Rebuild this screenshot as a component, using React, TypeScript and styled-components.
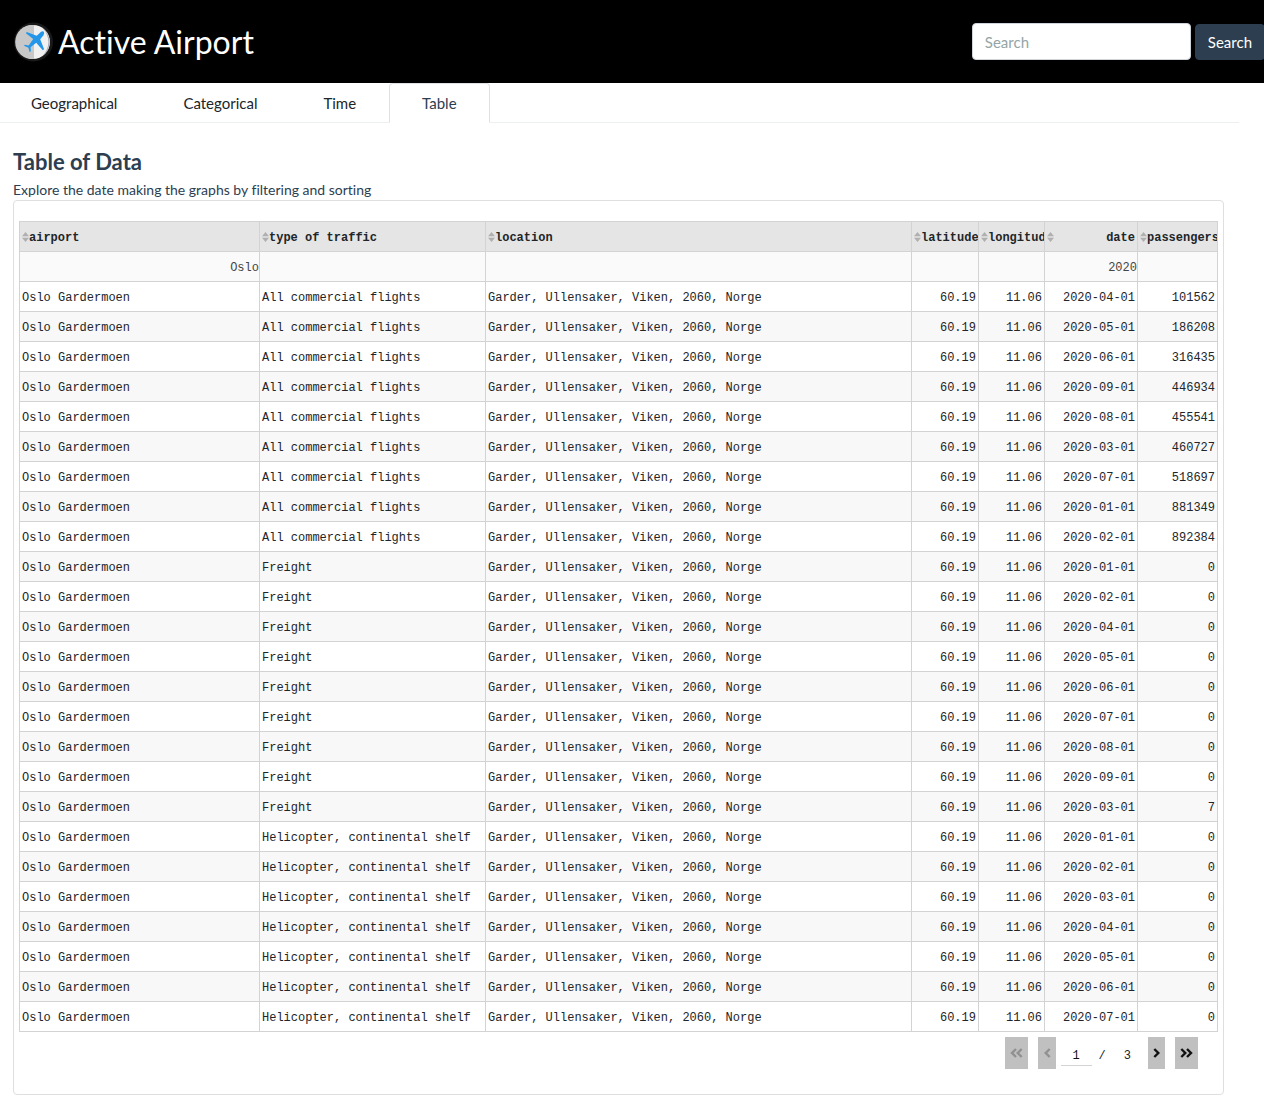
import React, { useState } from "react";
import styled, { createGlobalStyle } from "styled-components";

const GlobalStyle = createGlobalStyle`
  *, *::before, *::after { box-sizing: border-box; }
  body {
    margin: 0;
    background: #fff;
    color: #212529;
    font-family: Lato, "Liberation Sans", sans-serif;
    font-size: 15px;
    line-height: 1.5;
    font-variant-ligatures: none;
    overflow-x: hidden;
  }
  button, input { font: inherit; }
`;

const Header = styled.header`
  display: flex;
  align-items: center;
  justify-content: space-between;
  height: 83px;
  padding-left: 13px;
  background: #000;
  overflow: hidden;
`;

const Brand = styled.a`
  display: flex;
  align-items: center;
  gap: 5px;
  color: #fff;
  font-size: 32px;
  line-height: 48px;
  text-decoration: none;
`;

const SearchForm = styled.form`
  display: flex;
  align-items: flex-end;
  gap: 4px;
  margin-right: -1px;
`;

const SearchInput = styled.input`
  width: 219px;
  height: 37px;
  padding: 6px 12px;
  border: 1px solid #ced4da;
  border-radius: 4px;
  background: #fff;
  color: #7b8a8b;
  &::placeholder { color: #95a5a6; opacity: 1; }
`;

const SearchButton = styled.button`
  height: 36px;
  padding: 0 12px;
  border: 1px solid #2c3e50;
  border-radius: 4px;
  background: #2c3e50;
  color: #fff;
`;

const Tabs = styled.nav`
  display: flex;
  height: 40px;
  margin: 0 25px 0 -2px;
  border-bottom: 1px solid #ecf0f1;
`;

const Tab = styled.a<{ $active?: boolean }>`
  display: flex;
  align-items: center;
  height: 40px;
  padding: 0 32px;
  border: 1px solid ${(p) => (p.$active ? "#dee2e6" : "transparent")};
  border-bottom-color: ${(p) => (p.$active ? "#fff" : "#ecf0f1")};
  border-radius: 4px 4px 0 0;
  color: ${(p) => (p.$active ? "#2c3e50" : "#212529")};
  text-decoration: none;
`;

const Main = styled.main`
  padding: 25px 40px 12px 13px;
  color: #2c3e50;
`;

const Title = styled.h1`
  margin: 0;
  font-size: 22px;
  line-height: 28px;
  font-weight: 700;
`;

const Subtitle = styled.p`
  margin: 4px 0 1px;
  font-size: 14px;
  line-height: 19px;
`;

const Card = styled.section`
  padding: 20px 5px 25px;
  border: 1px solid #dfdfdf;
  border-radius: 4px;
  color: #212529;
  font-family: "Liberation Mono", monospace;
  font-size: 12px;
`;

const DataTable = styled.table`
  width: 100%;
  table-layout: fixed;
  border-collapse: collapse;
  line-height: 15px;
`;

const Col = styled.col<{ $share: number }>`
  width: ${(p) => (p.$share * 100) / 1198}%;
`;

const HeadCell = styled.th`
  height: 30px;
  padding: 4px 2px 0;
  border: 1px solid #d3d3d3;
  background: #e5e5e5;
  overflow: hidden;
`;

const SortButton = styled.button<{ $spread?: boolean }>`
  display: flex;
  align-items: flex-start;
  justify-content: ${(p) => (p.$spread ? "space-between" : "flex-start")};
  width: 100%;
  padding: 0;
  border: 0;
  background: none;
  color: inherit;
  font-weight: 700;
  white-space: nowrap;
`;

const SortIcon = styled.svg`
  flex: none;
  width: 7px;
  height: 10px;
  margin-top: 1px;
  fill: #b0b0b0;
`;

const FilterCell = styled.td`
  height: 30px;
  padding: 0;
  border: 1px solid #d3d3d3;
  background: #fafafa;
`;

const FilterInput = styled.input`
  display: block;
  width: 100%;
  height: 24px;
  padding: 2px 0 0;
  border: 0;
  background: transparent;
  color: #444;
  text-align: right;
  outline: none;
`;

const BodyRow = styled.tr`
  &:nth-child(even) { background: #f8f8f8; }
`;

const Cell = styled.td<{ $numeric?: boolean }>`
  height: 30px;
  padding: 4px 2px 0;
  border: 1px solid #d3d3d3;
  text-align: ${(p) => (p.$numeric ? "right" : "left")};
  white-space: nowrap;
  overflow: hidden;
`;

const Pager = styled.nav`
  display: flex;
  align-items: center;
  justify-content: flex-end;
  gap: 10px;
  padding: 5px 20px 0 0;
`;

const PageButton = styled.button`
  display: flex;
  align-items: center;
  justify-content: center;
  height: 32px;
  padding: 0 5px;
  border: 0;
  background: #c0c0c0;
  color: #111;
  &:disabled { color: #909090; }
`;

const PageNumbers = styled.div`
  display: flex;
  align-items: center;
  height: 24px;
  margin: 4px 7px 0 -5px;
`;

const PageInput = styled.input`
  width: 31px;
  height: 22px;
  padding: 2px 0 0;
  border: 0;
  border-bottom: 1px solid #d3d3d3;
  background: transparent;
  color: #111;
  text-align: center;
`;

const PageTotal = styled.span`
  display: flex;
  gap: 18px;
  padding: 2px 0 0 7px;
`;

function Logo() {
  return (
    <svg width="40" height="40" viewBox="0 0 40 40" aria-hidden="true">
      <circle cx="20.5" cy="20" r="19.5" fill="#191919" />
      <circle cx="20" cy="20" r="17" fill="#f1f1f1" />
      <path d="M21 3.1A17 17 0 1 0 21 36.9Z" fill="#c8c8c8" />
      <path d="M29 5.8A17 17 0 0 1 29 34.2A19 19 0 0 0 29 5.8Z" fill="#a9adba" />
      <path
        d="M30.7 9.7C29.4 8.7 27.7 10.1 26.5 11.2L23.7 13.8L13.7 10L12.9 11.2L20.2 17.1L15.7 23.4L11.8 22.7L11 23.8L15.4 25.7L16.6 29.9L17.9 29.2L17.6 25.2L23.2 20.7L29.8 28.2L31.1 27.2L27.2 17.3L29.7 14.2C30.7 12.9 31.7 11 30.7 9.7Z"
        fill="#2496e9"
      />
    </svg>
  );
}

function Chevron({ back, twice }: { back?: boolean; twice?: boolean }) {
  const w = twice ? 13 : back ? 8 : 7;
  return (
    <svg width={w} height="10" viewBox={`0 0 ${w} 10`} fill="none" stroke="currentColor" strokeWidth="2.4" aria-hidden="true">
      <g transform={back ? `translate(${w} 0) scale(-1 1)` : undefined}>
        <path d="M1.3 1L5.3 5L1.3 9" />
        {twice && <path d="M7 1L11 5L7 9" />}
      </g>
    </svg>
  );
}

const columns = [
  { name: "airport", share: 240, filter: "Oslo" },
  { name: "type of traffic", share: 226, filter: "" },
  { name: "location", share: 426, filter: "" },
  { name: "latitude", share: 67, filter: "" },
  { name: "longitude", share: 66, filter: "" },
  { name: "date", share: 93, filter: "2020" },
  { name: "passengers", share: 80, filter: "" },
];

const groups: { type: string; entries: [string, number][] }[] = [
  {
    type: "All commercial flights",
    entries: [["04", 101562], ["05", 186208], ["06", 316435], ["09", 446934], ["08", 455541], ["03", 460727], ["07", 518697], ["01", 881349], ["02", 892384]],
  },
  {
    type: "Freight",
    entries: [["01", 0], ["02", 0], ["04", 0], ["05", 0], ["06", 0], ["07", 0], ["08", 0], ["09", 0], ["03", 7]],
  },
  {
    type: "Helicopter, continental shelf",
    entries: [["01", 0], ["02", 0], ["03", 0], ["04", 0], ["05", 0], ["06", 0], ["07", 0]],
  },
];

const rows = groups.flatMap(({ type, entries }) =>
  entries.map(([month, passengers]) => ({ type, date: `2020-${month}-01`, passengers }))
);

const tabs = ["Geographical", "Categorical", "Time", "Table"];

export default function App() {
  const [active, setActive] = useState("Table");
  return (
    <>
      <GlobalStyle />
      <Header>
        <Brand href="#">
          <Logo />
          Active Airport
        </Brand>
        <SearchForm onSubmit={(e) => e.preventDefault()}>
          <SearchInput type="text" placeholder="Search" aria-label="Search" />
          <SearchButton type="submit">Search</SearchButton>
        </SearchForm>
      </Header>
      <Tabs>
        {tabs.map((t) => (
          <Tab key={t} href="#" $active={t === active} onClick={() => setActive(t)}>
            {t}
          </Tab>
        ))}
      </Tabs>
      <Main>
        <Title>Table of Data</Title>
        <Subtitle>Explore the date making the graphs by filtering and sorting</Subtitle>
        <Card>
          <DataTable>
            <colgroup>
              {columns.map((c) => (
                <Col key={c.name} $share={c.share} />
              ))}
            </colgroup>
            <thead>
              <tr>
                {columns.map((c) => (
                  <HeadCell key={c.name} scope="col">
                    <SortButton type="button" $spread={c.name === "date"}>
                      <SortIcon viewBox="0 0 7 10" aria-hidden="true">
                        <path d="M0 4.3L3.5 0L7 4.3ZM0 5.7L3.5 10L7 5.7Z" />
                      </SortIcon>
                      {c.name}
                    </SortButton>
                  </HeadCell>
                ))}
              </tr>
              <tr>
                {columns.map((c) => (
                  <FilterCell key={c.name}>
                    <FilterInput type="text" defaultValue={c.filter} aria-label={`Filter ${c.name}`} />
                  </FilterCell>
                ))}
              </tr>
            </thead>
            <tbody>
              {rows.map((r) => (
                <BodyRow key={r.type + r.date}>
                  <Cell>Oslo Gardermoen</Cell>
                  <Cell>{r.type}</Cell>
                  <Cell>Garder, Ullensaker, Viken, 2060, Norge</Cell>
                  <Cell $numeric>60.19</Cell>
                  <Cell $numeric>11.06</Cell>
                  <Cell $numeric>{r.date}</Cell>
                  <Cell $numeric>{r.passengers}</Cell>
                </BodyRow>
              ))}
            </tbody>
          </DataTable>
          <Pager aria-label="Pages">
            <PageButton type="button" disabled aria-label="First page">
              <Chevron back twice />
            </PageButton>
            <PageButton type="button" disabled aria-label="Previous page">
              <Chevron back />
            </PageButton>
            <PageNumbers>
              <PageInput type="text" defaultValue="1" aria-label="Page" />
              <PageTotal>
                <span>/</span>
                <span>3</span>
              </PageTotal>
            </PageNumbers>
            <PageButton type="button" aria-label="Next page">
              <Chevron />
            </PageButton>
            <PageButton type="button" aria-label="Last page">
              <Chevron twice />
            </PageButton>
          </Pager>
        </Card>
      </Main>
    </>
  );
}
